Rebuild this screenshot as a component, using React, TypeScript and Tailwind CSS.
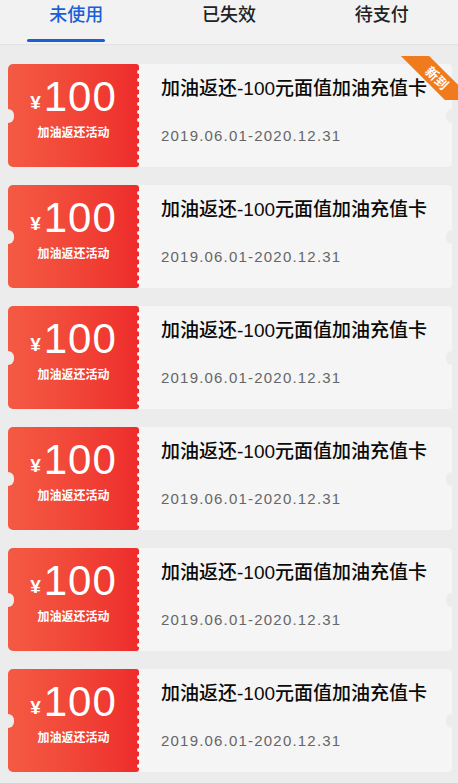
import React from 'react';

const FONT = "font-['Liberation_Sans','Noto_Sans_CJK_SC',sans-serif]";

const tabs = ['未使用', '已失效', '待支付'];

const coupons = [
  { id: 1, isNew: true },
  { id: 2, isNew: false },
  { id: 3, isNew: false },
  { id: 4, isNew: false },
  { id: 5, isNew: false },
  { id: 6, isNew: false },
];

function Ticket() {
  const scallops = Array.from({ length: 12 }, (_, i) => i);
  return (
    <div className="relative w-[131px] h-full shrink-0 rounded-l-[5px] rounded-r-[3px] bg-gradient-to-r from-[#f45a44] to-[#ee2b2b] flex flex-col items-center pt-[12px]">
      {/* left notch */}
      <div className="absolute left-[-6px] top-1/2 -translate-y-1/2 w-[12px] h-[14px] rounded-full bg-[#ececec]" />
      {/* scalloped right edge */}
      <div className="absolute right-[-2px] top-[6px] bottom-[4px] flex flex-col justify-between">
        {scallops.map((i) => (
          <div key={i} className="w-[4px] h-[4px] rounded-full bg-[#f4f4f4]" />
        ))}
      </div>
      <div className="flex items-end text-white leading-none">
        <span className="text-[19px] font-bold mb-[6px] mr-[3px]">¥</span>
        <span className="text-[42px] tracking-[1px]">100</span>
      </div>
      <div className="text-white text-[12px] font-bold mt-[9px] leading-none">加油返还活动</div>
    </div>
  );
}

function CouponCard({ isNew }: { isNew: boolean }) {
  return (
    <div className="relative flex h-[103px] ml-[8px] mr-[6px]">
      <Ticket />
      <div className="relative flex-1 bg-[#f5f5f5] rounded-r-[4px] overflow-hidden pl-[22px] pt-[12px]">
        <div className="text-[19px] font-medium text-[#0a0a0a] leading-[26px]">加油返还-100元面值加油充值卡</div>
        <div className="text-[15px] text-[#666] leading-[20px] mt-[24px] tracking-[1.2px]">2019.06.01-2020.12.31</div>
        <div className="absolute right-[-6px] top-1/2 -translate-y-1/2 w-[12px] h-[14px] rounded-full bg-[#ececec]" />
      </div>
      {isNew && (
        <div className="absolute right-[-6px] top-[-8px] w-[58px] h-[44px] overflow-hidden">
          <div className="absolute left-[-13px] top-[12px] w-[100px] h-[20px] rotate-45 bg-[#f07b1c] flex items-center justify-center">
            <span className="text-white text-[13px] font-bold leading-none">新到</span>
          </div>
        </div>
      )}
    </div>
  );
}

export default function App() {
  return (
    <div className={`${FONT} w-[458px] h-[783px] bg-[#ececec] overflow-hidden`}>
      <div className="h-[45px] bg-[#f2f2f2] border-b border-[#e2e2e2] grid grid-cols-3">
        {tabs.map((t, i) => (
          <div key={t} className="relative flex justify-center pt-[3px]">
            <span className={`text-[18px] font-medium leading-[24px] ${i === 0 ? 'text-[#1b5fd8]' : 'text-[#222]'}`}>{t}</span>
            {i === 0 && <div className="absolute bottom-[2px] left-[27px] w-[78px] h-[3px] bg-[#1b5fd8] rounded-full" />}
          </div>
        ))}
      </div>
      <div className="flex flex-col gap-[18px] pt-[19px]">
        {coupons.map((c) => (
          <CouponCard key={c.id} isNew={c.isNew} />
        ))}
      </div>
    </div>
  );
}
